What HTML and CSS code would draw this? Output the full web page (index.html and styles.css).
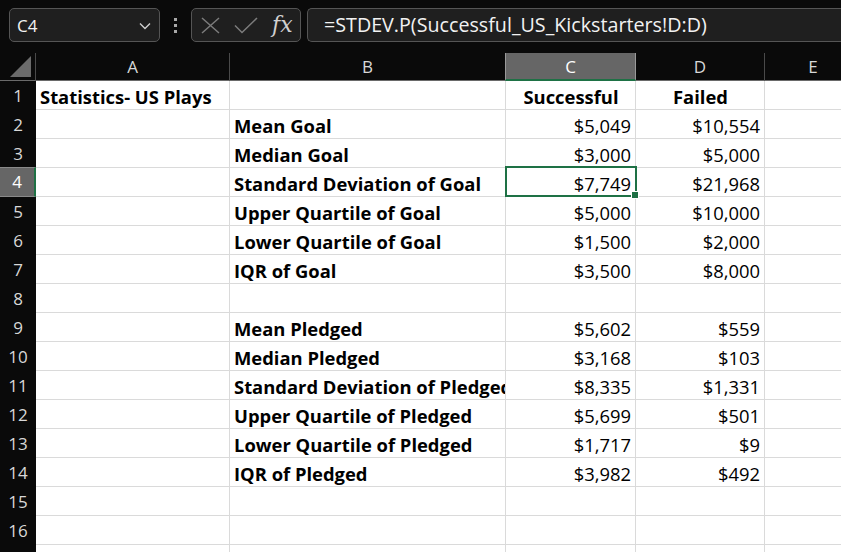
FILE: index.html
```html
<!DOCTYPE html>
<html>
<head>
<meta charset="utf-8">
<link rel="stylesheet" href="styles.css">
</head>
<body>
<div class="toolbar">
  <div class="namebox">
    <span class="nb-text">C4</span>
    <svg class="chev" width="12" height="8" viewBox="0 0 12 8"><path d="M1 1.5 L6 6.5 L11 1.5" fill="none" stroke="#cfcfcf" stroke-width="1.4"/></svg>
  </div>
  <div class="dots"><i></i><i></i><i></i></div>
  <div class="fxbox">
    <svg width="19" height="17" viewBox="0 0 19 17"><path d="M1 1 L18 16 M18 1 L1 16" fill="none" stroke="#7c7c7c" stroke-width="1.5"/></svg>
    <svg width="24" height="17" viewBox="0 0 24 17"><path d="M1 8.5 L8 15.5 L23 1" fill="none" stroke="#7c7c7c" stroke-width="1.5"/></svg>
    <span class="fx">fx</span>
  </div>
  <div class="formula">=STDEV.P(Successful_US_Kickstarters!D:D)</div>
</div>
<div class="sheet">
  <div class="corner"><svg width="22" height="22" viewBox="0 0 22 22"><path d="M21 0 L21 21 L0 21 Z" fill="#6b6b6b"/></svg></div>
  <div class="ch">A</div><div class="ch">B</div><div class="ch selh">C</div><div class="ch">D</div><div class="ch">E</div>

  <div class="rh">1</div><div class="c b">Statistics- US Plays</div><div class="c"></div><div class="c b ctr">Successful</div><div class="c b ctr">Failed</div><div class="c"></div>
  <div class="rh">2</div><div class="c"></div><div class="c b">Mean Goal</div><div class="c num">$5,049</div><div class="c num">$10,554</div><div class="c"></div>
  <div class="rh">3</div><div class="c"></div><div class="c b">Median Goal</div><div class="c num">$3,000</div><div class="c num">$5,000</div><div class="c"></div>
  <div class="rh selr">4</div><div class="c"></div><div class="c b">Standard Deviation of Goal</div><div class="c num active">$7,749<span class="sel"><span class="handle"></span></span></div><div class="c num">$21,968</div><div class="c"></div>
  <div class="rh">5</div><div class="c"></div><div class="c b">Upper Quartile of Goal</div><div class="c num">$5,000</div><div class="c num">$10,000</div><div class="c"></div>
  <div class="rh">6</div><div class="c"></div><div class="c b">Lower Quartile of Goal</div><div class="c num">$1,500</div><div class="c num">$2,000</div><div class="c"></div>
  <div class="rh">7</div><div class="c"></div><div class="c b">IQR of Goal</div><div class="c num">$3,500</div><div class="c num">$8,000</div><div class="c"></div>
  <div class="rh">8</div><div class="c"></div><div class="c"></div><div class="c"></div><div class="c"></div><div class="c"></div>
  <div class="rh">9</div><div class="c"></div><div class="c b">Mean Pledged</div><div class="c num">$5,602</div><div class="c num">$559</div><div class="c"></div>
  <div class="rh">10</div><div class="c"></div><div class="c b">Median Pledged</div><div class="c num">$3,168</div><div class="c num">$103</div><div class="c"></div>
  <div class="rh">11</div><div class="c"></div><div class="c b">Standard Deviation of Pledged</div><div class="c num">$8,335</div><div class="c num">$1,331</div><div class="c"></div>
  <div class="rh">12</div><div class="c"></div><div class="c b">Upper Quartile of Pledged</div><div class="c num">$5,699</div><div class="c num">$501</div><div class="c"></div>
  <div class="rh">13</div><div class="c"></div><div class="c b">Lower Quartile of Pledged</div><div class="c num">$1,717</div><div class="c num">$9</div><div class="c"></div>
  <div class="rh">14</div><div class="c"></div><div class="c b">IQR of Pledged</div><div class="c num">$3,982</div><div class="c num">$492</div><div class="c"></div>
  <div class="rh">15</div><div class="c"></div><div class="c"></div><div class="c"></div><div class="c"></div><div class="c"></div>
  <div class="rh">16</div><div class="c"></div><div class="c"></div><div class="c"></div><div class="c"></div><div class="c"></div>
  <div class="rh"></div><div class="c"></div><div class="c"></div><div class="c"></div><div class="c"></div><div class="c"></div>
</div>
</body>
</html>
```
FILE: styles.css
```css
html, body {
  margin: 0;
  padding: 0;
  background: #0a0a0a;
  overflow: hidden;
  width: 841px;
  height: 552px;
}
.toolbar {
  height: 53px;
  box-sizing: border-box;
  padding: 8px 0 0 9px;
  display: flex;
  align-items: flex-start;
  background: #0a0a0a;
  overflow: hidden;
}
.namebox {
  width: 151px;
  flex: none;
  height: 34px;
  box-sizing: border-box;
  border: 1px solid #555;
  border-radius: 5px;
  background: #1f1f1f;
  display: flex;
  align-items: center;
  justify-content: space-between;
  padding: 0 8px 0 7px;
  font-family: "Open Sans", sans-serif;
  font-size: 17px;
  color: #f2f2f2;
}
.chev { margin-top: 2px; }
.dots {
  width: 31px;
  flex: none;
  height: 34px;
  display: flex;
  flex-direction: column;
  align-items: center;
  justify-content: center;
  gap: 3px;
}
.dots i {
  display: block;
  width: 3px;
  height: 3px;
  background: #a8a8a8;
}
.fxbox {
  width: 110px;
  flex: none;
  height: 34px;
  box-sizing: border-box;
  border: 1px solid #555;
  border-radius: 5px;
  background: #1f1f1f;
  display: flex;
  align-items: center;
  padding-left: 9px;
  gap: 14px;
}
.fx {
  font-family: "DejaVu Serif", "Liberation Serif", serif;
  font-style: italic;
  font-size: 22px;
  color: #d0d0d0;
  line-height: 1;
}
.formula {
  margin-left: 6px;
  flex: 1;
  height: 34px;
  box-sizing: border-box;
  border: 1px solid #555;
  border-right: none;
  border-radius: 5px 0 0 5px;
  background: #1f1f1f;
  font-family: "Open Sans", sans-serif;
  font-size: 19.7px;
  color: #f2f2f2;
  line-height: 31px;
  padding-left: 16px;
  white-space: nowrap;
  overflow: hidden;
}
.sheet {
  display: grid;
  grid-template-columns: 36px 194px 276px 130px 129px 97px;
  grid-template-rows: 28px;
  grid-auto-rows: 29px;
  background: #fff;
  width: 841px;
  overflow: hidden;
}
.corner {
  background: #0a0a0a;
  border-right: 1px solid #4a4a4a;
  border-bottom: 1px solid #6a6a6a;
  box-sizing: border-box;
  display: flex;
  align-items: flex-end;
  justify-content: flex-end;
  padding: 0 3px 2px 0;
}
.ch {
  background: #0a0a0a;
  color: #d8d8d8;
  font-family: "Open Sans", sans-serif;
  font-size: 17px;
  text-align: center;
  line-height: 27px;
  box-sizing: border-box;
  border-right: 1px solid #4a4a4a;
  border-bottom: 1px solid #6a6a6a;
}
.ch.selh {
  background: #666;
  color: #fff;
  border-left: 1px solid #999;
  border-right: 1px solid #999;
  margin-left: -1px;
  border-bottom: 2px solid #1e7145;
}
.rh {
  background: #0a0a0a;
  color: #d8d8d8;
  font-family: "Open Sans", sans-serif;
  font-size: 17px;
  text-align: center;
  line-height: 29px;
  box-sizing: border-box;
}
.rh.selr {
  background: #666;
  color: #fff;
  border-right: 2px solid #1e7145;
  border-top: 1px solid #8a8a8a;
  border-bottom: 1px solid #8a8a8a;
  margin-top: -1px;
  height: 30px;
  line-height: 28px;
}
.c {
  box-sizing: border-box;
  border-right: 1px solid #dadada;
  border-bottom: 1px solid #dadada;
  font-family: "Open Sans", "Liberation Sans", sans-serif;
  font-size: 18.4px;
  color: #000;
  white-space: nowrap;
  overflow: hidden;
  padding: 3px 3px 0 4px;
  line-height: 26px;
}
.c.b { font-weight: bold; }
.c.num { text-align: right; padding-right: 4px; }
.c.ctr { text-align: center; }
.c.active { position: relative; overflow: visible; }
.sel {
  position: absolute;
  left: -1px;
  top: -2px;
  width: 132px;
  height: 31px;
  box-sizing: border-box;
  border: 2px solid #1e7145;
  z-index: 2;
}
.handle {
  position: absolute;
  right: -4px;
  bottom: -4px;
  width: 6px;
  height: 6px;
  background: #1e7145;
  border: 1px solid #fff;
}
```
